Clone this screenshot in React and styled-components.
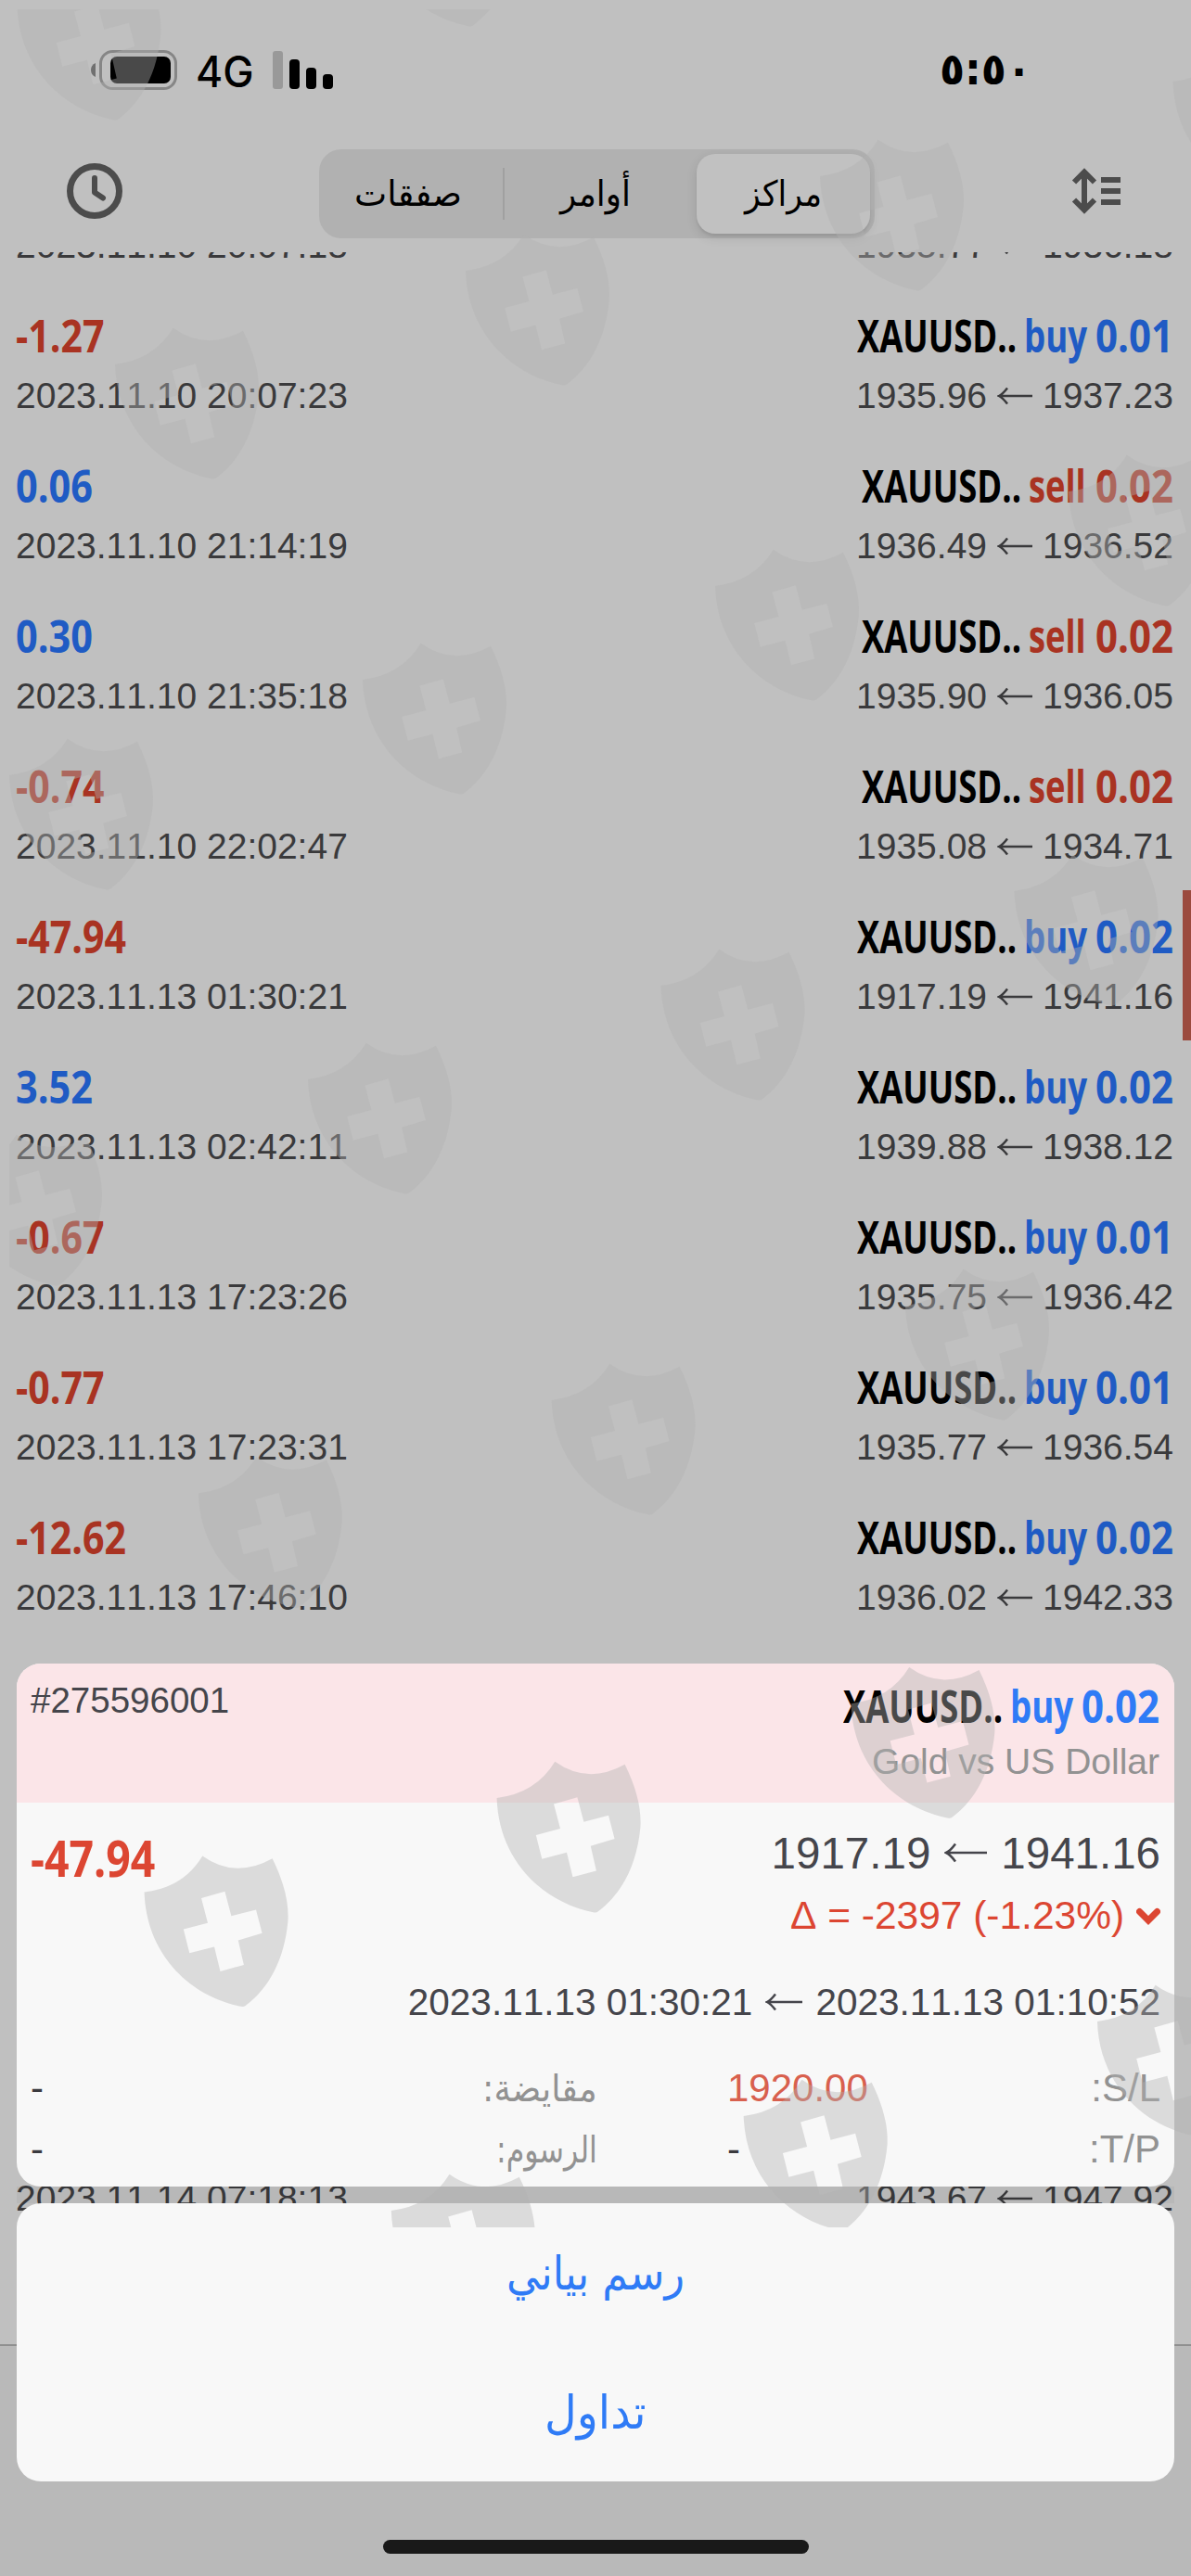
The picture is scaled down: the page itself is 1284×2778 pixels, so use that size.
import React, { useLayoutEffect, useRef, useState } from "react";
import styled, { createGlobalStyle } from "styled-components";

const BLUE = "#1f5bc4";
const RED = "#a93322";

const GlobalStyle = createGlobalStyle`
  html, body { margin: 0; padding: 0; background: #c0c0c0; }
  * { box-sizing: border-box; }
`;

const Screen = styled.div`
  position: relative;
  display: flex;
  flex-direction: column;
  width: 1284px;
  height: 2778px;
  overflow: hidden;
  background: #c0c0c0;
  color: #3a3a3c;
  font-family: "Liberation Sans", "DejaVu Sans", sans-serif;
  font-kerning: none;
  direction: ltr;
`;

/* Text squeezed horizontally to a fixed advance width */
const FitBox = styled.span`
  display: inline-block;
  flex: none;
  width: ${(p) => p.$w}px;
  white-space: nowrap;
  direction: ltr;
  text-align: left;
`;
const FitInner = styled.span`
  display: inline-block;
  transform-origin: 0 50%;
`;
function Fit({ w, rtl, children }) {
  const ref = useRef(null);
  const [scale, setScale] = useState(1);
  useLayoutEffect(() => {
    if (ref.current) setScale(w / ref.current.offsetWidth);
  }, [w, children]);
  return (
    <FitBox $w={w}>
      <FitInner ref={ref} dir={rtl ? "rtl" : "ltr"} style={{ transform: `scaleX(${scale})` }}>
        {children}
      </FitInner>
    </FitBox>
  );
}

const StatusBar = styled.header`
  display: flex;
  justify-content: space-between;
  height: 140px;
  padding: 54px 172px 0 98px;
`;
const StatusGroup = styled.div`
  display: flex;
  align-items: flex-start;
`;
const Network = styled.div`
  margin: -1px 20px 0 19px;
  font: 500 46px/48px Inter, sans-serif;
  color: #000;
`;
const Clock = styled.div`
  margin-top: -4px;
  font: 700 48px/48px "DejaVu Sans", sans-serif;
  color: #000;
`;

const NavBar = styled.nav`
  display: flex;
  justify-content: space-between;
  align-items: center;
  height: 132px;
  padding: 0 74px 0 72px;
`;
const Segments = styled.div`
  display: flex;
  align-items: center;
  width: 599px;
  height: 96px;
  padding: 5px;
  margin: 6px 1px 0 0;
  border-radius: 24px;
  background: #b1b1b1;
`;
const Segment = styled.div`
  display: flex;
  align-items: center;
  justify-content: center;
  flex: none;
  width: ${(p) => p.$w}px;
  height: ${(p) => (p.$active ? 86 : 56)}px;
  padding-right: ${(p) => (p.$active ? 0 : 10)}px;
  border-radius: ${(p) => (p.$active ? 20 : 0)}px;
  background: ${(p) => (p.$active ? "#c1c1c1" : "transparent")};
  box-shadow: ${(p) => (p.$active ? "0 4px 12px rgba(0,0,0,.12), 0 3px 2px rgba(0,0,0,.05)" : "none")};
  border-right: ${(p) => (p.$divider ? "2px solid #a0a0a0" : "0")};
  font: 400 38px/56px "DejaVu Sans", sans-serif;
  color: #000;
`;

const List = styled.main`
  height: 2256px;
  flex: none;
  overflow: hidden;
`;
const Rows = styled.div`
  margin-top: -122px;
`;
const Row = styled.div`
  display: flex;
  justify-content: space-between;
  height: 162px;
  padding: 22px ${(p) => (p.$marked ? 10 : 19)}px 0 17px;
  border-right: ${(p) => (p.$marked ? "9px solid #9b4a3e" : "0")};
`;
const Spacer = styled.div`
  height: 486px;
`;
const Column = styled.div`
  display: flex;
  flex-direction: column;
  gap: 13px;
  align-items: ${(p) => (p.$end ? "flex-end" : "flex-start")};
`;
const Heading = styled.div`
  display: flex;
  height: 56px;
  font-family: "Open Sans", sans-serif;
  font-weight: 700;
  font-size: ${(p) => p.$size || 48}px;
  line-height: 56px;
  color: ${(p) => p.$color || "#000"};
`;
const Side = styled.span`
  display: flex;
  gap: ${(p) => (p.$sell ? 10 : 9)}px;
  margin-left: 8px;
  color: ${(p) => p.$color};
`;
const Small = styled.div`
  display: flex;
  font-size: ${(p) => p.$size || 39}px;
  line-height: 48px;
  height: 48px;
  white-space: pre;
  color: ${(p) => p.$color || "inherit"};
`;
const ArrowBox = styled.svg`
  flex: none;
  fill: none;
  stroke: currentColor;
  stroke-width: 2.5;
  margin: ${(p) => p.$top}px ${(p) => p.$gap}px 0;
`;
function Arrow({ w = 38, h = 20, top = 14, gap = 11 }) {
  return (
    <ArrowBox $top={top} $gap={gap} width={w} height={h} viewBox={`0 0 ${w} ${h}`}>
      <path d={`M${w} ${h / 2}H2M${h / 2 + 1} 1.5Q${h / 4 + 1} ${h / 2 - 2} 2 ${h / 2}Q${h / 4 + 1} ${h / 2 + 2} ${h / 2 + 1} ${h - 1.5}`} />
    </ArrowBox>
  );
}

const profitWidth = (text, unit = 24) => {
  const digits = text.replace(/[^0-9]/g, "").length;
  return digits * unit + unit / 2 + (text.startsWith("-") ? unit / 2 : 0) - 1;
};

function Title({ side, lot, blue = BLUE }) {
  const sell = side === "sell";
  return (
    <Heading>
      <Fit w={172}>XAUUSD..</Fit>
      <Side $sell={sell} $color={sell ? RED : blue}>
        <Fit w={sell ? 62 : 68}>{side}</Fit>
        <Fit w={84}>{lot}</Fit>
      </Side>
    </Heading>
  );
}

const positions = [
  ["", "2023.11.10 20:07:18", "", "", "1935.77", "1936.18"],
  ["-1.27", "2023.11.10 20:07:23", "buy", "0.01", "1935.96", "1937.23"],
  ["0.06", "2023.11.10 21:14:19", "sell", "0.02", "1936.49", "1936.52"],
  ["0.30", "2023.11.10 21:35:18", "sell", "0.02", "1935.90", "1936.05"],
  ["-0.74", "2023.11.10 22:02:47", "sell", "0.02", "1935.08", "1934.71"],
  ["-47.94", "2023.11.13 01:30:21", "buy", "0.02", "1917.19", "1941.16"],
  ["3.52", "2023.11.13 02:42:11", "buy", "0.02", "1939.88", "1938.12"],
  ["-0.67", "2023.11.13 17:23:26", "buy", "0.01", "1935.75", "1936.42"],
  ["-0.77", "2023.11.13 17:23:31", "buy", "0.01", "1935.77", "1936.54"],
  ["-12.62", "2023.11.13 17:46:10", "buy", "0.02", "1936.02", "1942.33"],
];
const lastPosition = ["", "2023.11.14 07:18:13", "", "", "1943.67", "1947.92"];

function Position({ data }) {
  const [profit, time, side, lot, now, open] = data;
  return (
    <Row $marked={profit === "-47.94"}>
      <Column>
        <Heading $color={profit.startsWith("-") ? RED : BLUE}>
          {profit && <Fit w={profitWidth(profit)}>{profit}</Fit>}
        </Heading>
        <Small>{time}</Small>
      </Column>
      <Column $end>
        {side ? <Title side={side} lot={lot} /> : <Heading />}
        <Small>
          {now}
          <Arrow />
          {open}
        </Small>
      </Column>
    </Row>
  );
}

const TabBar = styled.footer`
  display: flex;
  justify-content: center;
  align-items: flex-end;
  flex: 1;
  padding-bottom: 24px;
  border-top: 2px solid #8f8f8f;
  background: #b9b9b9;
`;
const HomeIndicator = styled.div`
  width: 459px;
  height: 15px;
  border-radius: 8px;
  background: #191919;
`;

/* Action sheet floating over the list */
const Sheet = styled.section`
  position: absolute;
  left: 18px;
  right: 18px;
  top: 1794px;
  display: flex;
  flex-direction: column;
`;
const Gap = styled.div`
  height: 18px;
  background: rgba(0, 0, 0, 0.04);
`;
const Card = styled.div`
  overflow: hidden;
  border-radius: 26px;
  background: #f8f8f8;
  color: #45454b;
`;
const CardHead = styled.div`
  display: flex;
  justify-content: space-between;
  height: 150px;
  padding: 16px 16px 0 15px;
  background: #fbe5e8;
`;
const HeadColumn = styled(Column)`
  gap: 8px;
  padding-top: 2px;
`;
const CardBody = styled.div`
  height: 414px;
  padding: 31px 15px 0 15px;
`;
const BodyRow = styled.div`
  display: flex;
  justify-content: ${(p) => (p.$end ? "flex-end" : "space-between")};
  align-items: flex-start;
  height: ${(p) => p.$h}px;
`;
const Chevron = styled.svg`
  margin: 15px 0 0 13px;
`;
const Cell = styled.div`
  display: flex;
  justify-content: ${(p) => (p.$end ? "flex-end" : "flex-start")};
  font-size: 42px;
  line-height: 48px;
  color: ${(p) => p.$color || "#3a3a3e"};
`;
const DetailRow = styled.div`
  display: flex;
  height: 66px;
`;
const Label = styled(Cell)`
  color: #929292;
  width: ${(p) => p.$w}px;
  font-size: ${(p) => (p.$ar ? 40 : 42)}px;
  font-family: ${(p) => (p.$ar ? `"DejaVu Sans"` : `"Liberation Sans"`)}, sans-serif;
`;
const Value = styled(Cell)`
  width: ${(p) => p.$w}px;
`;
const Action = styled.div`
  display: flex;
  align-items: center;
  justify-content: center;
  height: 150px;
  padding-top: 2px;
  font: 400 50px/60px "DejaVu Sans", sans-serif;
  color: #2f7bf6;
`;

/* Translucent shields laid over the whole page */
const Watermark = styled.svg`
  position: absolute;
  left: 10px;
  top: 10px;
  overflow: hidden;
  pointer-events: none;
`;
const shields = [
  [18.5, 6], [401, -95], [124, 393], [502, 292], [884, 190], [1264.5, 88],
  [10, 836], [391, 733], [771, 632], [1152, 530],
  [-45, 1263], [332, 1164], [712.5, 1063], [1093.5, 961],
  [213.8, 1610.5], [594.6, 1510], [976, 1408],
  [155.6, 2040.6], [535.6, 1939], [917.5, 1837.3],
  [421.8, 2384], [801.7, 2282], [1183, 2180],
];
const SHIELD =
  "M0 0Q42 -5 62.7 -39.2Q98 -14 138 -36.3C151 -10 156 12 154.8 31.4C151 72 135 103 109 122.5Q107 124 104 123.2C48 112 2 66 0 0Z" +
  "M61.4 6.5L68.4 33.1L42.2 40L48.7 65.7L75.4 58.8L81.9 85.3L107.3 78.4L101.2 51.8L127 44.1L120.4 18.8L93.8 25.7L86.8 -0.8Z";

export default function App() {
  return (
    <Screen>
      <GlobalStyle />
      <StatusBar>
        <StatusGroup>
          <svg width="94" height="44" viewBox="0 0 94 44">
            <path d="M5 14v15Q0 27 0 21.500T5 14Z" fill="#707070" />
            <rect x="10.500" y="1.500" width="81" height="40" rx="13" fill="none" stroke="#868686" strokeWidth="3" />
            <rect x="21" y="7" width="65" height="29" rx="7" fill="#000" />
          </svg>
          <Network>
            <Fit w={63}>4G</Fit>
          </Network>
          <svg width="66" height="44" viewBox="0 0 66 44">
            <rect x="0" y="1" width="11" height="41" rx="3" fill="#999" />
            <rect x="18" y="10" width="11" height="32" rx="4" />
            <rect x="36" y="19" width="11" height="23" rx="4" />
            <rect x="54" y="26" width="11" height="16" rx="4" />
          </svg>
        </StatusGroup>
        <Clock>
          <Fit w={99}>{"\u202D٥:٥٠\u202C"}</Fit>
        </Clock>
      </StatusBar>

      <NavBar>
        <svg width="60" height="60" viewBox="0 0 60 60" fill="none" stroke="#4c4c4c" strokeLinecap="round" strokeLinejoin="round">
          <circle cx="30" cy="30" r="26.500" strokeWidth="7" />
          <path d="M30 16V31.500L39 37.500" strokeWidth="6" />
        </svg>
        <Segments>
          <Segment $w={195} $divider>
            <Fit w={116} rtl>صفقات</Fit>
          </Segment>
          <Segment $w={207}>
            <Fit w={76} rtl>أوامر</Fit>
          </Segment>
          <Segment $w={187} $active>
            <Fit w={83} rtl>مراكز</Fit>
          </Segment>
        </Segments>
        <svg width="55" height="50" viewBox="0 0 55 50" fill="none" stroke="#4c4c4c">
          <path d="M14 5V45M3 15.500L14 4.500L25 15.500M3 34.500L14 45.500L25 34.500" strokeWidth="6" />
          <path d="M32 13H53M32 25H53M32 37H53" strokeWidth="6" />
        </svg>
      </NavBar>

      <List>
        <Rows>
          {positions.map((p) => (
            <Position key={p[1]} data={p} />
          ))}
          <Spacer />
          <Position data={lastPosition} />
        </Rows>
      </List>

      <TabBar>
        <HomeIndicator />
      </TabBar>

      <Sheet>
        <Card>
          <CardHead>
            <Small $size={38.5}>#275596001</Small>
            <HeadColumn $end>
              <Title side="buy" lot="0.02" blue="#2f7bf6" />
              <Small $color="#929292">Gold vs US Dollar</Small>
            </HeadColumn>
          </CardHead>
          <CardBody>
            <BodyRow $h={67}>
              <Heading $size={54} $color="#dc4632">
                <Fit w={134}>-47.94</Fit>
              </Heading>
              <Small $size={47.5}>
                1917.19
                <Arrow w={46} h={22} top={12} gap={15} />
                1941.16
              </Small>
            </BodyRow>
            <BodyRow $h={93} $end>
              <Small $size={42} $color="#dc4632">
                <Fit w={360}>Δ = -2397 (-1.23%)</Fit>
                <Chevron width="26" height="20" viewBox="0 0 26 20" fill="none" stroke="currentColor" strokeWidth="7" strokeLinecap="round">
                  <path d="M3.500 4.500L13 14L22.500 4.500" />
                </Chevron>
              </Small>
            </BodyRow>
            <BodyRow $h={92.5} $end>
              <Small $size={40.5}>
                2023.11.13 01:30:21
                <Arrow w={40} h={20} top={14} gap={14} />
                2023.11.13 01:10:52
              </Small>
            </BodyRow>
            <DetailRow>
              <Value $w={386}>-</Value>
              <Label $w={225} $end $ar>
                <Fit w={124} rtl>مقايضة:</Fit>
              </Label>
              <Value $w={140} />
              <Value $w={200} $color="#d8604e">1920.00</Value>
              <Label $w={267} $end>:S/L</Label>
            </DetailRow>
            <DetailRow>
              <Value $w={386}>-</Value>
              <Label $w={225} $end $ar>
                <Fit w={109} rtl>الرسوم:</Fit>
              </Label>
              <Value $w={140} />
              <Value $w={200}>-</Value>
              <Label $w={267} $end>:T/P</Label>
            </DetailRow>
          </CardBody>
        </Card>
        <Gap />
        <Card>
          <Action>
            <Fit w={192} rtl>رسم بياني</Fit>
          </Action>
          <Action>
            <Fit w={110} rtl>تداول</Fit>
          </Action>
        </Card>
      </Sheet>

      <Watermark width="1274" height="2392" viewBox="10 10 1274 2392">
        <g fill="#b2b2b2" fillOpacity="0.41" fillRule="evenodd">
          {shields.map(([x, y]) => (
            <path key={`${x},${y}`} d={SHIELD} transform={`translate(${x} ${y})`} />
          ))}
        </g>
      </Watermark>
    </Screen>
  );
}
